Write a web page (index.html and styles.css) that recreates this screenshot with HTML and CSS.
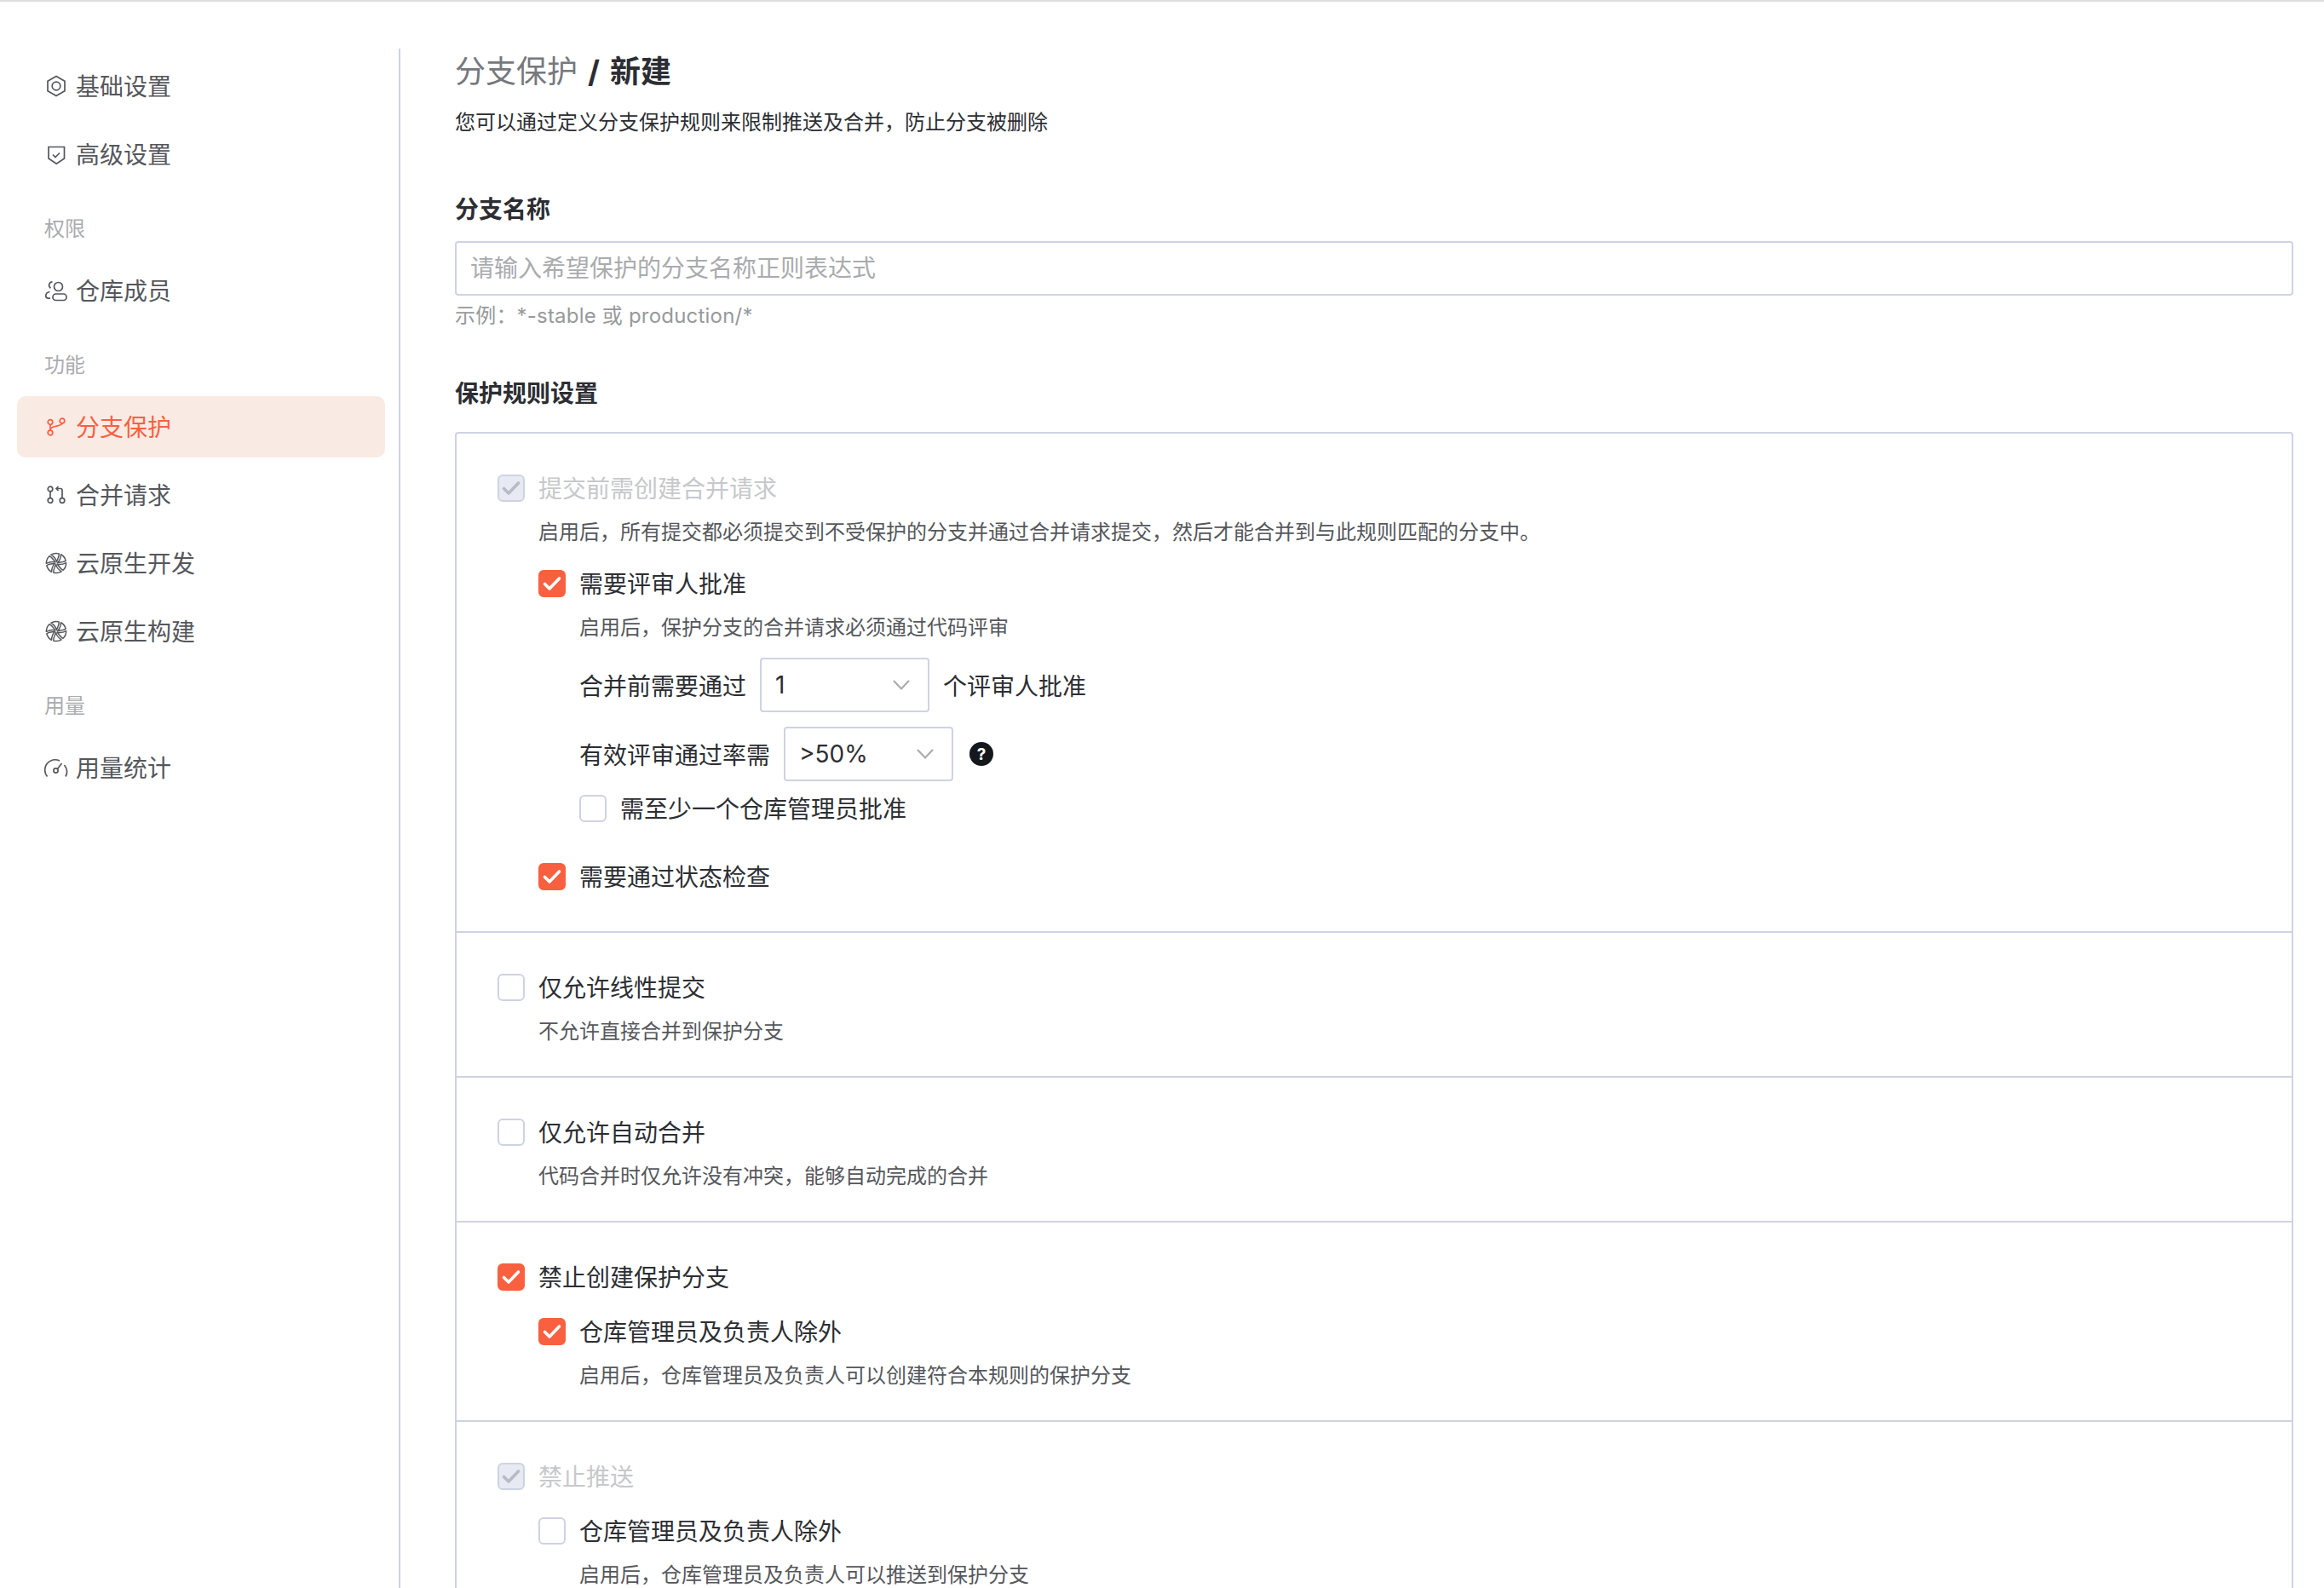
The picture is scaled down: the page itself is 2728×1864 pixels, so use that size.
FILE: index.html
```html
<!DOCTYPE html>
<html lang="zh-CN">
<head>
    <meta charset="utf-8">
    <title>分支保护</title>
    <link rel="stylesheet" href="styles.css">
</head>
<body>
    <svg class="defs">
        <symbol id="tick" viewBox="0 0 32 32">
            <path d="M7.5 16.5l5.5 5.5L24.5 10" fill="none" stroke="currentColor" stroke-width="3.6" stroke-linecap="round" stroke-linejoin="round"/>
        </symbol>
        <symbol id="chevron" viewBox="0 0 24 14">
            <path d="M3 2l9 9.500L21 2" fill="none" stroke="currentColor" stroke-width="2.200"/>
        </symbol>
        <symbol id="cloud" viewBox="0 0 28 28">
            <g fill="none" stroke="currentColor" stroke-width="1.500" stroke-linejoin="round">
                <path id="petal" d="M14.300 12.500C13.800 9.500 11.500 6.500 7.900 4.100A11.600 11.600 0 0 1 17.200 2.900C17.500 6 15.800 9.500 14.300 12.500z"/>
                <use href="#petal" transform="rotate(60 14 14)"/>
                <use href="#petal" transform="rotate(120 14 14)"/>
                <use href="#petal" transform="rotate(180 14 14)"/>
                <use href="#petal" transform="rotate(240 14 14)"/>
                <use href="#petal" transform="rotate(300 14 14)"/>
            </g>
        </symbol>
    </svg>

    <div class="page">
        <aside class="sidebar">
            <a class="nav-item">
                <svg class="nav-icon" viewBox="0 0 28 28"><path d="M14 2.500l10 5.800v11.400l-10 5.800-10-5.800V8.300z"/><circle cx="14" cy="14" r="4.800"/></svg>
                基础设置
            </a>
            <a class="nav-item">
                <svg class="nav-icon" viewBox="0 0 28 28"><path d="M5 5.500h18.500V19L14.250 25.300 5 19z"/><path d="M10 14.500l3 3 5-5"/></svg>
                高级设置
            </a>
            <div class="nav-label">权限</div>
            <a class="nav-item">
                <svg class="nav-icon" viewBox="0 0 28 28"><circle cx="16.500" cy="9.500" r="5"/><rect x="10" y="18" width="16" height="7.500" rx="3.500"/><path d="M9.500 3.800a4 4 0 0 0-2 7.400M6.500 15.500C3.500 16 1.800 18 1.800 20.300c0 1.800 1 2.900 3 2.900H7"/></svg>
                仓库成员
            </a>
            <div class="nav-label">功能</div>
            <a class="nav-item active">
                <svg class="nav-icon" viewBox="0 0 28 28"><circle cx="7" cy="8.500" r="2.800"/><circle cx="21" cy="7" r="2.800"/><circle cx="7" cy="21" r="2.800"/><path d="M7 11.300v6.900M7 18c0-3 2.500-3.800 6-4.500 4-.8 8-1.500 8-3.700"/></svg>
                分支保护
            </a>
            <a class="nav-item">
                <svg class="nav-icon" viewBox="0 0 28 28"><circle cx="7" cy="7" r="2.800"/><circle cx="7" cy="20.500" r="2.800"/><circle cx="21" cy="20.500" r="2.800"/><path d="M7 9.800v7.900M21 17.700V8.500a2 2 0 0 0-2-2h-5M16.500 4L14 6.500 16.500 9"/></svg>
                合并请求
            </a>
            <a class="nav-item">
                <svg class="nav-icon-fill"><use href="#cloud"/></svg>
                云原生开发
            </a>
            <a class="nav-item">
                <svg class="nav-icon-fill"><use href="#cloud"/></svg>
                云原生构建
            </a>
            <div class="nav-label">用量</div>
            <a class="nav-item">
                <svg class="nav-icon" viewBox="0 0 28 28"><path d="M3.500 24.500A12 12 0 0 1 18 6M23.500 11a12 12 0 0 1 1.500 13.500"/><circle cx="13.500" cy="17.500" r="2.600"/><path d="M15.500 15.500L20.500 9"/></svg>
                用量统计
            </a>
        </aside>

        <main class="content">
            <h1 class="title"><span class="title-muted">分支保护</span> / 新建</h1>
            <p class="intro">您可以通过定义分支保护规则来限制推送及合并，防止分支被删除</p>

            <h2 class="field-title first">分支名称</h2>
            <input class="text-input" type="text" placeholder="请输入希望保护的分支名称正则表达式">
            <p class="hint">示例：*-stable 或 production/*</p>

            <h2 class="field-title second">保护规则设置</h2>
            <div class="rules">
                <section class="rule rule-long">
                    <label class="check-row disabled">
                        <span class="box checked-off"><svg><use href="#tick"/></svg></span>
                        提交前需创建合并请求
                    </label>
                    <p class="desc">启用后，所有提交都必须提交到不受保护的分支并通过合并请求提交，然后才能合并到与此规则匹配的分支中。</p>
                    <div class="nested review">
                        <label class="check-row">
                            <span class="box checked"><svg><use href="#tick"/></svg></span>
                            需要评审人批准
                        </label>
                        <p class="desc">启用后，保护分支的合并请求必须通过代码评审</p>
                        <div class="select-row">
                            合并前需要通过
                            <div class="select">1<svg class="chevron"><use href="#chevron"/></svg></div>
                            个评审人批准
                        </div>
                        <div class="select-row">
                            有效评审通过率需
                            <div class="select">&gt;50%<svg class="chevron"><use href="#chevron"/></svg></div>
                            <span class="help">?</span>
                        </div>
                        <label class="check-row admin">
                            <span class="box"></span>
                            需至少一个仓库管理员批准
                        </label>
                    </div>
                    <div class="nested status">
                        <label class="check-row">
                            <span class="box checked"><svg><use href="#tick"/></svg></span>
                            需要通过状态检查
                        </label>
                    </div>
                </section>

                <section class="rule">
                    <label class="check-row">
                        <span class="box"></span>
                        仅允许线性提交
                    </label>
                    <p class="desc">不允许直接合并到保护分支</p>
                </section>

                <section class="rule">
                    <label class="check-row">
                        <span class="box"></span>
                        仅允许自动合并
                    </label>
                    <p class="desc">代码合并时仅允许没有冲突，能够自动完成的合并</p>
                </section>

                <section class="rule">
                    <label class="check-row">
                        <span class="box checked"><svg><use href="#tick"/></svg></span>
                        禁止创建保护分支
                    </label>
                    <div class="nested except">
                        <label class="check-row">
                            <span class="box checked"><svg><use href="#tick"/></svg></span>
                            仓库管理员及负责人除外
                        </label>
                        <p class="desc">启用后，仓库管理员及负责人可以创建符合本规则的保护分支</p>
                    </div>
                </section>

                <section class="rule">
                    <label class="check-row disabled">
                        <span class="box checked-off"><svg><use href="#tick"/></svg></span>
                        禁止推送
                    </label>
                    <div class="nested except">
                        <label class="check-row">
                            <span class="box"></span>
                            仓库管理员及负责人除外
                        </label>
                        <p class="desc">启用后，仓库管理员及负责人可以推送到保护分支</p>
                    </div>
                </section>
            </div>
        </main>
    </div>
</body>
</html>
```

FILE: styles.css
```css
* {
    box-sizing: border-box;
}

html, body {
    height: 100%;
}

body {
    margin: 0;
    overflow: hidden;
    background-color: #fff;
    color: #2c2e33;
    font-family: Inter, 'Noto Sans CJK SC', sans-serif;
    font-size: 28px;
}

.defs {
    display: none;
}

.page {
    display: flex;
    align-items: stretch;
    height: 100%;
    padding-top: 55px;
    border-top: 2px solid #dedede;
}

/* sidebar */
.sidebar {
    flex: 0 0 470px;
    padding: 8px 16px 0 20px;
    border-right: 2px solid #ced3e3;
}

.nav-item {
    display: flex;
    align-items: center;
    gap: 9px;
    height: 72px;
    margin-bottom: 8px;
    padding: 2px 0 0 32px;
    border-radius: 10px;
    color: #55575c;
    line-height: 32px;
}

.nav-item.active {
    background-color: #faeae4;
    color: #f9603f;
}

.nav-icon, .nav-icon-fill {
    flex: none;
    width: 28px;
    height: 28px;
    margin-top: -2px;
}

.nav-icon {
    fill: none;
    stroke: currentColor;
    stroke-width: 1.7;
}

.nav-label {
    height: 80px;
    padding: 28px 0 20px 32px;
    color: #aaacaf;
    font-size: 24px;
    line-height: 32px;
}

/* main column */
.content {
    flex: 1;
    min-width: 0;
    padding: 0 36px 0 64px;
}

.title {
    height: 52px;
    margin: 0;
    padding-top: 1px;
    font-size: 36px;
    font-weight: 700;
    line-height: 52px;
    word-spacing: 3.5px;
}

.title-muted {
    color: #76787d;
    font-weight: 400;
}

.intro {
    height: 36px;
    margin: 16px 0 0;
    padding-top: 1px;
    font-size: 24px;
    line-height: 36px;
}

.field-title {
    height: 40px;
    margin: 0;
    padding-top: 1px;
    font-size: 28px;
    font-weight: 700;
    line-height: 40px;
}

.field-title.first {
    margin-top: 64px;
}

.field-title.second {
    margin-top: 53px;
}

.text-input {
    display: block;
    width: 100%;
    height: 64px;
    margin-top: 18px;
    padding: 0 16px;
    border: 2px solid #ced3e3;
    border-radius: 4px;
    font-family: inherit;
    font-size: 28px;
}

.text-input::placeholder {
    color: #a9abae;
    opacity: 1;
}

.hint {
    height: 36px;
    margin: 5px 0 0;
    padding-top: 1px;
    color: #97999c;
    font-size: 24px;
    letter-spacing: 0.2px;
    line-height: 36px;
}

/* rules box */
.rules {
    margin-top: 26px;
    border: 2px solid #ced3e3;
    border-radius: 4px;
}

.rule {
    padding: 48px 48px 35px;
    border-bottom: 2px solid #ced3e3;
}

.rule-long {
    padding-bottom: 48px;
}

.check-row {
    display: flex;
    align-items: center;
    gap: 16px;
    height: 32px;
    padding-top: 2px;
    line-height: 32px;
}

.check-row.disabled {
    color: #c6c8cb;
}

.box {
    flex: none;
    width: 32px;
    height: 32px;
    margin-top: -2px;
    border: 2px solid #ced3e3;
    border-radius: 6px;
    background-color: #fff;
}

.box svg {
    display: block;
    width: 32px;
    height: 32px;
    margin: -2px;
}

.box.checked {
    border-color: #f9603f;
    background-color: #f9603f;
    color: #fff;
}

.box.checked-off {
    background-color: #e7eaf3;
    color: #b8bbc4;
}

.desc {
    height: 36px;
    margin: 17px 0 0 48px;
    padding-top: 1px;
    color: #55575c;
    font-size: 24px;
    line-height: 36px;
}

.nested {
    margin-left: 48px;
}

.nested.review {
    margin-top: 27px;
}

.nested.status {
    margin-top: 48px;
}

.nested.except {
    margin-top: 32px;
}

.select-row {
    display: flex;
    align-items: center;
    gap: 16px;
    height: 64px;
    margin: 17px 0 0 48px;
}

.desc + .select-row {
    margin-top: 18px;
}

.select {
    display: flex;
    align-items: center;
    justify-content: space-between;
    width: 199px;
    height: 64px;
    padding: 0 19px 0 16px;
    border: 2px solid #ced3e3;
    border-radius: 4px;
    color: #2c2e33;
}

.chevron {
    width: 24px;
    height: 14px;
    color: #a9abae;
}

.help {
    display: flex;
    align-items: center;
    justify-content: center;
    width: 28px;
    height: 28px;
    margin-left: 3px;
    border-radius: 50%;
    background-color: #14171c;
    color: #fff;
    font-size: 19px;
    font-weight: 700;
}

.check-row.admin {
    margin: 16px 0 0 48px;
}
```
